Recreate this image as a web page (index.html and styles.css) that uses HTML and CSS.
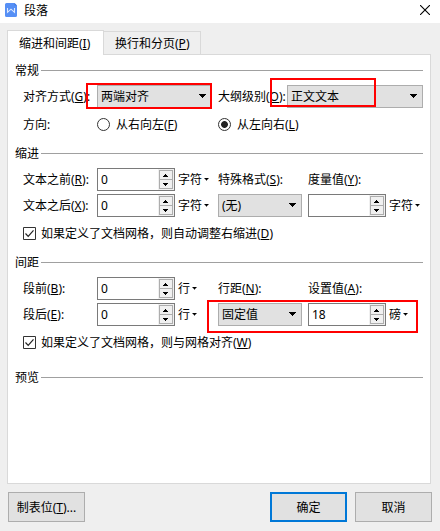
FILE: index.html
```
<!DOCTYPE html>
<html lang="zh-CN">
<head>
<meta charset="utf-8">
<title>段落</title>
<link rel="stylesheet" href="styles.css">
</head>
<body>
<div class="dialog">
  <header class="titlebar">
    <svg class="logo" width="12" height="14" viewBox="0 0 12 14"><path d="M1.500 0H9.500L12 2.500v10a1.500 1.500 0 0 1-1.500 1.500h-9A1.500 1.500 0 0 1 0 12.500v-11A1.500 1.500 0 0 1 1.500 0z" fill="#568ff5"/><path d="M9.500 0L12 2.500H9.500z" fill="#3f78e0"/><path d="M2.500 5v4.300L6 6.200l3.500 3.100V5" fill="none" stroke="#dce9ff" stroke-width="1.100"/></svg>
    <span class="title">段落</span>
    <svg class="close" width="10" height="10" viewBox="0 0 10 10"><path d="M0 0l10 10M10 0L0 10" stroke="#000" stroke-width="1.100"/></svg>
  </header>
  <nav class="tabs">
    <div class="tab active">缩进和间距(<u>I</u>)</div>
    <div class="tab">换行和分页(<u>P</u>)</div>
  </nav>
  <main class="panel">
    <section class="group general">
      <h2>常规</h2>
      <div class="row align">
        <label>对齐方式(<u>G</u>):</label>
        <div class="select wide">两端对齐</div>
        <label>大纲级别(<u>O</u>):</label>
        <div class="select">正文文本</div>
      </div>
      <div class="row direction">
        <label>方向:</label>
        <div class="choice"><i class="radio"></i>从右向左(<u>F</u>)</div>
        <div class="choice"><i class="radio on"></i>从左向右(<u>L</u>)</div>
      </div>
    </section>
    <section class="group indent">
      <h2>缩进</h2>
      <div class="row">
        <label>文本之前(<u>R</u>):</label>
        <div class="spin">0<span class="steps"><i class="up"></i><i class="down"></i></span></div>
        <span class="unit">字符</span>
        <label>特殊格式(<u>S</u>):</label>
        <label>度量值(<u>Y</u>):</label>
      </div>
      <div class="row">
        <label>文本之后(<u>X</u>):</label>
        <div class="spin">0<span class="steps"><i class="up"></i><i class="down"></i></span></div>
        <span class="unit">字符</span>
        <div class="select short">(无)</div>
        <div class="spin"><span class="steps"><i class="up"></i><i class="down"></i></span></div>
        <span class="unit">字符</span>
      </div>
      <div class="check"><svg width="13" height="13" viewBox="0 0 13 13"><path d="M.5.5h12v12H.5z" fill="#fff" stroke="#333"/><path d="M2.500 6.500l2.700 2.800 5.300-6" fill="none" stroke="#222" stroke-width="1.200"/></svg>如果定义了文档网格，则自动调整右缩进(<u>D</u>)</div>
    </section>
    <section class="group spacing">
      <h2>间距</h2>
      <div class="row">
        <label>段前(<u>B</u>):</label>
        <div class="spin">0<span class="steps"><i class="up"></i><i class="down"></i></span></div>
        <span class="unit">行</span>
        <label>行距(<u>N</u>):</label>
        <label>设置值(<u>A</u>):</label>
      </div>
      <div class="row">
        <label>段后(<u>E</u>):</label>
        <div class="spin">0<span class="steps"><i class="up"></i><i class="down"></i></span></div>
        <span class="unit">行</span>
        <div class="select short">固定值</div>
        <div class="spin">18<span class="steps"><i class="up"></i><i class="down"></i></span></div>
        <span class="unit">磅</span>
      </div>
      <div class="check"><svg width="13" height="13" viewBox="0 0 13 13"><path d="M.5.5h12v12H.5z" fill="#fff" stroke="#333"/><path d="M2.500 6.500l2.700 2.800 5.300-6" fill="none" stroke="#222" stroke-width="1.200"/></svg>如果定义了文档网格，则与网格对齐(<u>W</u>)</div>
    </section>
    <section class="group">
      <h2>预览</h2>
    </section>
  </main>
  <footer class="actions">
    <button class="btn">制表位(<u>T</u>)...</button>
    <button class="btn primary">确定</button>
    <button class="btn">取消</button>
  </footer>
  <div class="mark mark-align"></div>
  <div class="mark mark-outline"></div>
  <div class="mark mark-spacing"></div>
</div>
</body>
</html>
```
FILE: styles.css
```
:root {
  --arrow-down: polygon(0 0, 5px 0, 5px 1px, 4px 1px, 4px 2px, 3px 2px, 3px 3px, 2px 3px, 2px 2px, 1px 2px, 1px 1px, 0 1px);
  --arrow-up: polygon(2px 0, 3px 0, 3px 1px, 4px 1px, 4px 2px, 5px 2px, 5px 3px, 0 3px, 0 2px, 1px 2px, 1px 1px, 2px 1px);
  --arrow-large: polygon(0 0, 7px 0, 7px 1px, 6px 1px, 6px 2px, 5px 2px, 5px 3px, 4px 3px, 4px 4px, 3px 4px, 3px 3px, 2px 3px, 2px 2px, 1px 2px, 1px 1px, 0 1px);
}
* { box-sizing: border-box; }
body {
  margin: 0;
  font: 12px/17px "Noto Sans", "Noto Sans CJK SC", sans-serif;
  color: #000;
}
.dialog {
  position: relative;
  width: 440px;
  height: 531px;
  background: #efefef;
  overflow: hidden;
  white-space: nowrap;
}
u { text-decoration-thickness: 1px; text-underline-offset: 1px; text-decoration-skip-ink: none; }
.titlebar {
  display: flex;
  align-items: center;
  height: 23px;
  padding: 0 10px 3px 5px;
  background: #fff;
}
.title { margin-left: 7px; }
.close { margin-left: auto; }
.tabs {
  display: flex;
  align-items: flex-end;
  height: 31px;
  padding-left: 7px;
}
.tab {
  width: 97px;
  height: 23px;
  padding: 3px 0 0 11px;
  border: 1px solid #d9d9d9;
  border-width: 1px 1px 0 0;
}
.tab.active {
  position: relative;
  height: 25px;
  margin-bottom: -1px;
  padding-top: 4px;
  border-left-width: 1px;
  background: #fff;
}
.panel {
  width: 424px;
  height: 430px;
  margin-left: 7px;
  padding: 7px 7px 0;
  border: 1px solid #d9d9d9;
  background: #fff;
}
.group h2 {
  display: flex;
  align-items: center;
  gap: 2px;
  margin: 0 0 6px;
  font: inherit;
}
.group h2::after { content: ""; flex: 1; height: 1px; background: #a0a0a0; }
.general { height: 83px; }
.indent { height: 109px; }
.spacing { height: 115px; }
.row {
  display: grid;
  grid-template-columns: 74px 81px 40px 90px 81px 1fr;
  align-items: center;
  height: 23px;
  margin: 0 0 3px 8px;
}
.row.align { grid-template-columns: 74px 121px 69px 136px; }
.row.direction { grid-template-columns: 74px 121px 1fr; height: 17px; margin-top: 8px; }
.select, .spin {
  display: flex;
  align-items: center;
  justify-content: space-between;
  height: 23px;
}
.select { padding: 0 5px 0 3px; border: 1px solid #adadad; background: #e1e1e1; }
.select::after { content: ""; width: 7px; height: 4px; margin-top: -1px; background: #000; clip-path: var(--arrow-large); }
.select.wide { width: 115px; }
.select.short { width: 84px; }
.spin { width: 78px; padding: 0 0 0 3px; border: 1px solid #7a7a7a; background: #fff; }
.steps {
  display: flex;
  flex-direction: column;
  width: 16px;
  height: 21px;
  margin-left: auto;
  padding: 1px;
  background: #f0f0f0;
}
.steps i {
  height: 10px;
  padding: 3px 0 0 3px;
  border: 1px solid #adadad;
  background: #f0f0f0;
}
.steps .down { margin-top: -1px; }
.steps i::after { content: ""; display: block; width: 5px; height: 3px; background: #000; }
.steps .up::after { clip-path: var(--arrow-up); }
.steps .down::after { clip-path: var(--arrow-down); }
.unit { display: flex; align-items: center; gap: 2px; }
.unit::after { content: ""; width: 5px; height: 3px; margin-top: -1px; background: #000; clip-path: var(--arrow-down); }
.choice { display: flex; align-items: center; }
.radio { width: 13px; height: 13px; margin-right: 6px; border: 1px solid #333; border-radius: 50%; }
.radio.on { background: radial-gradient(circle, #222 3px, #fff 3.8px); }
.check { display: flex; align-items: center; height: 17px; margin: 8px 0 0 8px; }
.check svg { margin-right: 5px; }
.actions { display: flex; gap: 8px; padding: 8px 8px 0; }
.btn {
  width: 77px;
  height: 30px;
  padding: 0;
  border: 1px solid #adadad;
  background: #e1e1e1;
  font: inherit;
  color: inherit;
}
.btn.primary { margin-left: auto; border: 2px solid #0078d7; }
.mark { position: absolute; border: 2px solid #f00; }
.mark-align { left: 86px; top: 83px; width: 126px; height: 26px; }
.mark-outline { left: 270px; top: 78px; width: 106px; height: 29px; }
.mark-spacing { left: 207px; top: 300px; width: 211px; height: 33px; }
```
